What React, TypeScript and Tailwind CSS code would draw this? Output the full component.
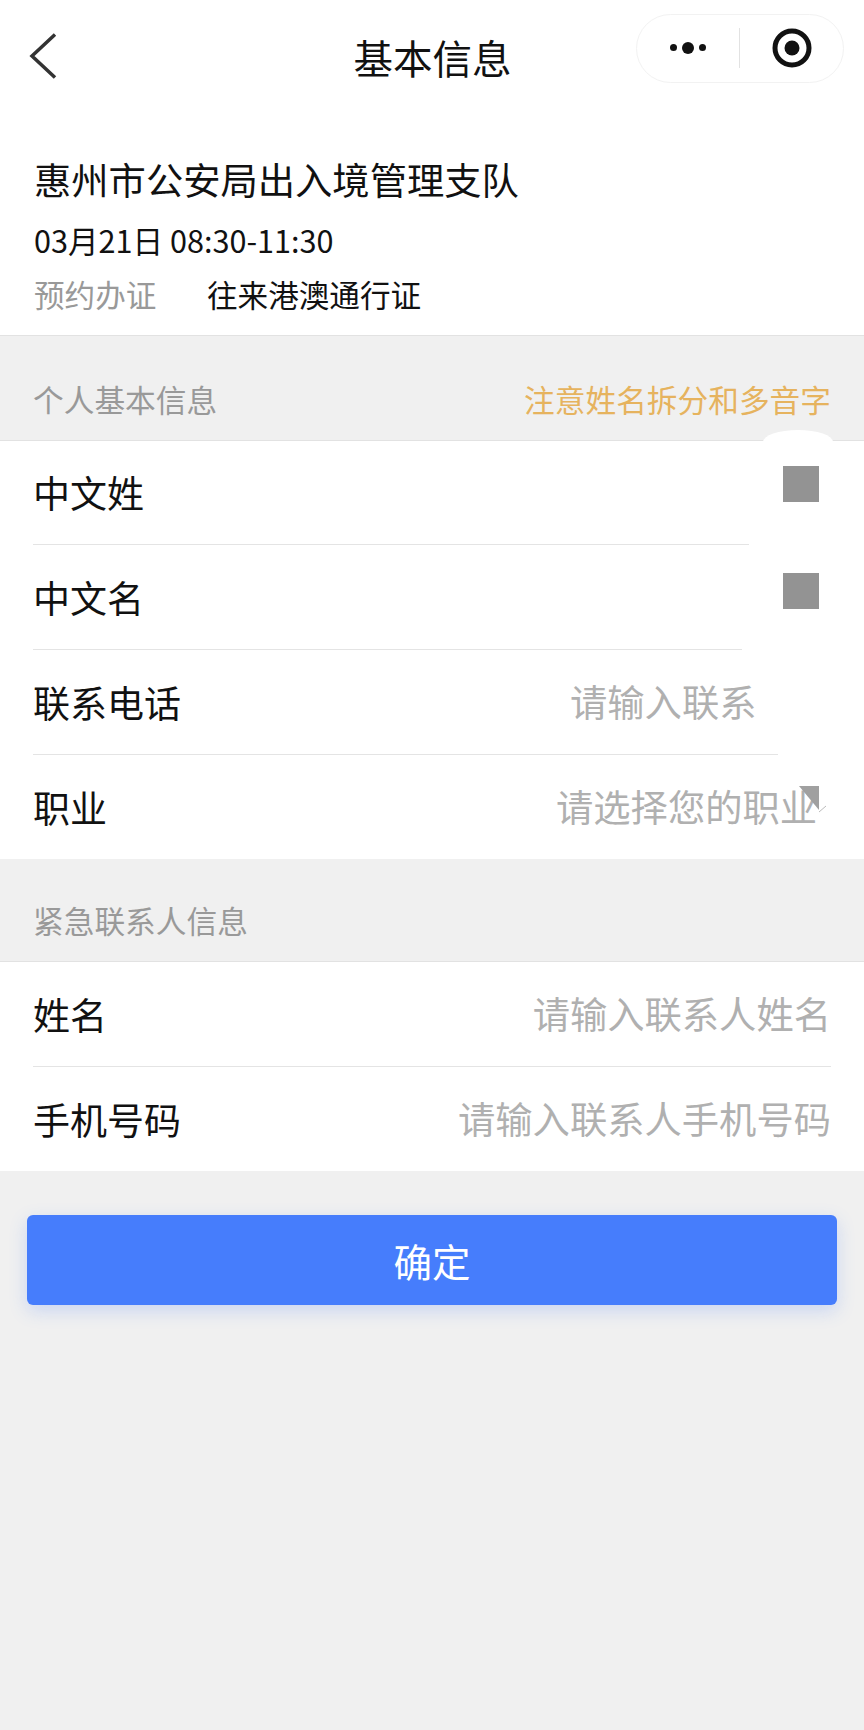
import React from 'react'

const Row = ({ label, placeholder, line, h = 'h-[105px]' }: { label: string; placeholder?: string; line?: string; h?: string }) => (
  <div className={`${h} flex flex-col`}>
    <div className="flex-1 flex items-center justify-between pl-[33px] pr-[33px]">
      <span className="text-[37px] leading-none text-[#111]">{label}</span>
      {placeholder && <span className="text-[37.3px] leading-none text-[#b0b0b0]">{placeholder}</span>}
    </div>
    {line && <div className={`ml-[33px] h-px bg-[#e4e4e4] ${line}`} />}
  </div>
)

const App = () => {
  return (
    <div className="w-[864px] h-[1730px] overflow-hidden bg-[#f0f0f0] font-['Noto_Sans_CJK_SC','Noto_Sans',sans-serif]">
      {/* top bar */}
      <div className="h-[146px] bg-white pt-[14px] pr-[20px] pl-[29px] grid grid-cols-[1fr_auto_1fr] items-start">
        <svg width="28" height="46" viewBox="0 0 28 46" fill="none" className="mt-[19px]">
          <path d="M26 1.5 L3 23 L26 44.5" stroke="#333" strokeWidth="3.5" />
        </svg>
        <div className="text-[39.5px] leading-none text-[#111] mt-[23px] mr-[8px]">基本信息</div>
        <div className="justify-self-end w-[208px] h-[69px] rounded-full bg-white border border-[#f2f2f2] flex items-center">
          <div className="w-[102px] flex items-center justify-center gap-[5px] -mt-[2px]">
            <span className="w-[7px] h-[7px] rounded-full bg-[#111]" />
            <span className="w-[12px] h-[12px] rounded-full bg-[#111]" />
            <span className="w-[7px] h-[7px] rounded-full bg-[#111]" />
          </div>
          <div className="w-px h-[40px] bg-[#e2e2e2] -mt-[2px]" />
          <div className="flex-1 flex items-center justify-center -mt-[1px]">
            <svg width="40" height="40" viewBox="0 0 40 40" fill="none">
              <circle cx="20" cy="20" r="17" stroke="#111" strokeWidth="5" />
              <circle cx="20" cy="20" r="7.5" fill="#111" />
            </svg>
          </div>
        </div>
      </div>

      {/* appointment */}
      <div className="h-[190px] bg-white border-b border-[#e2e2e2] pl-[34px]">
        <div className="text-[37.3px] leading-none text-[#111] pt-[15px]">惠州市公安局出入境管理支队</div>
        <div className="text-[30.6px] leading-none text-[#111] mt-[27px]">03月21日 08:30-11:30</div>
        <div className="flex text-[30.6px] leading-none mt-[23px]">
          <span className="text-[#999] w-[173px]">预约办证</span>
          <span className="text-[#111]">往来港澳通行证</span>
        </div>
      </div>

      {/* personal */}
      <div className="h-[104px] flex items-center justify-between pl-[33px] pr-[33px] pt-[23px]">
        <span className="text-[30.7px] leading-none text-[#999]">个人基本信息</span>
        <span className="text-[30.7px] leading-none text-[#e6b35e]">注意姓名拆分和多音字</span>
      </div>
      <div className="relative bg-white border-t border-[#e2e2e2]">
        <Row label="中文姓" line="w-[716px]" h="h-[104px]" />
        <Row label="中文名" line="w-[709px]" />
        <Row label="联系电话" line="w-[745px]" />
        <Row label="职业" h="h-[104px]" />
        {/* masked blocks over the form */}
        <div className="absolute left-[763px] -top-[11px] w-[70px] h-[24px] rounded-[50%] bg-white" />
        <div className="absolute left-[556px] top-[314px] h-[104px] flex items-center">
          <span className="text-[37.3px] leading-none text-[#b0b0b0]">请选择您的职业</span>
        </div>
        <div className="absolute left-[570px] top-[209px] w-[294px] h-[104px] bg-white flex items-center">
          <span className="text-[37.3px] leading-none text-[#b0b0b0]">请输入联系</span>
        </div>
        <div className="absolute left-[783px] top-[25px] w-[36px] h-[36px] bg-[#939393]" />
        <div className="absolute left-[783px] top-[132px] w-[36px] h-[36px] bg-[#939393]" />
        <svg width="28" height="36" viewBox="0 0 28 36" fill="none" className="absolute left-[799px] top-[345px]">
          <path d="M0 0 H20 V24 Z" fill="#a0a0a0" />
          <path d="M20 26 L27 20" stroke="#bbb" strokeWidth="1" />
        </svg>
      </div>

      {/* emergency contact */}
      <div className="h-[102px] flex items-center pl-[33px] pt-[20px]">
        <span className="text-[30.7px] leading-none text-[#999]">紧急联系人信息</span>
      </div>
      <div className="bg-white border-t border-[#e2e2e2]">
        <Row label="姓名" placeholder="请输入联系人姓名" line="w-[798px]" />
        <Row label="手机号码" placeholder="请输入联系人手机号码" h="h-[104px]" />
      </div>

      <div className="px-[27px] pt-[44px]">
        <button className="w-[810px] h-[90px] rounded-[6px] bg-[#467dfc] text-white text-[38.5px] leading-none shadow-[0_6px_18px_rgba(70,125,252,0.22)]">
          确定
        </button>
      </div>
    </div>
  )
}

export default App
